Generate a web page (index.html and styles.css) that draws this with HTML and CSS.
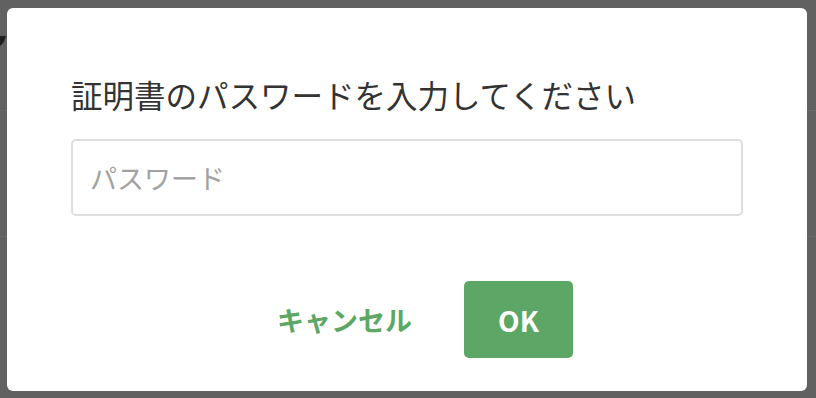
FILE: index.html
```html
<!DOCTYPE html>
<html lang="ja">
<head>
<meta charset="utf-8">
<link rel="stylesheet" href="styles.css">
</head>
<body>
<div class="backdrop">
  <div class="bg-line bg-line-1"></div>
  <div class="bg-line bg-line-2"></div>
  <div class="bg-mark"></div>
</div>
<div class="dialog">
  <h1 class="title">証明書のパスワードを入力してください</h1>
  <input class="field" type="password" placeholder="パスワード">
  <div class="actions">
    <button class="btn btn-cancel">キャンセル</button>
    <button class="btn btn-ok">OK</button>
  </div>
</div>
</body>
</html>
```
FILE: styles.css
```css
html, body {
  margin: 0;
  height: 100%;
}
body {
  background: #616161;
  padding: 8px 9px 7px 7px;
  box-sizing: border-box;
  font-family: "Noto Sans CJK JP", "Noto Sans", sans-serif;
  position: relative;
  overflow: hidden;
}
.backdrop {
  position: absolute;
  inset: 0;
}
.bg-line {
  position: absolute;
  left: 0;
  right: 0;
  height: 1px;
  background: #6b6b6b;
}
.bg-line-1 { top: 110px; }
.bg-line-2 { top: 236px; }
.bg-mark {
  position: absolute;
  left: -4px;
  top: 36px;
  width: 8px;
  height: 11px;
  background: #1e1e1e;
  border-radius: 0 0 6px 2px;
  transform: skewX(-20deg);
}
.dialog {
  position: relative;
  background: #ffffff;
  border-radius: 6px;
  height: 100%;
  box-sizing: border-box;
  padding: 66px 64px 33px 64px;
  display: flex;
  flex-direction: column;
}
.title {
  margin: 0;
  font-size: 31.5px;
  font-weight: 400;
  line-height: 40px;
  color: #333333;
  white-space: nowrap;
}
.field {
  margin-top: 25px;
  height: 77px;
  width: 672px;
  box-sizing: border-box;
  border: 2px solid #dedede;
  border-radius: 5px;
  padding: 0 17px;
  font-family: inherit;
  font-size: 27px;
  color: #333;
  outline: none;
}
.field::placeholder {
  color: #a2a2a2;
}
.actions {
  margin-top: auto;
  display: flex;
  justify-content: center;
  gap: 16px;
}
.btn {
  height: 77px;
  border: none;
  border-radius: 5px;
  font-family: inherit;
  font-weight: 700;
  font-size: 27px;
  padding: 0 36px;
  cursor: pointer;
}
.btn-cancel {
  background: transparent;
  color: #5ca765;
}
.btn-ok {
  background: #5ca765;
  color: #ffffff;
  width: 109px;
  padding: 0;
  font-size: 28px;
}
```
